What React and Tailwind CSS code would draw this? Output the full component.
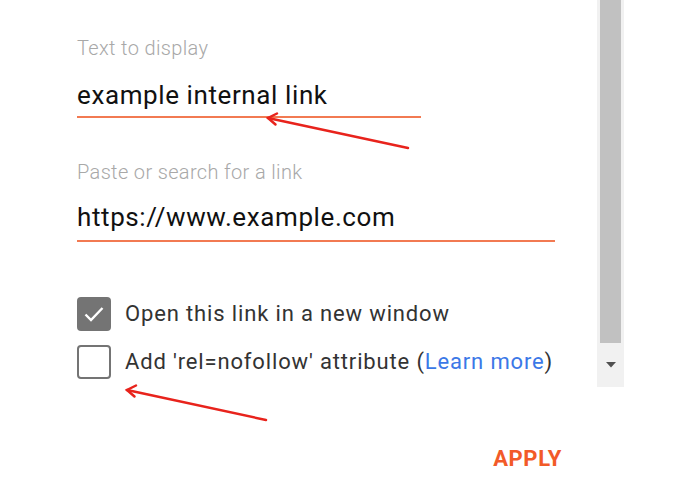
export default function App() {
  return (
    <div
      className="relative w-[697px] h-[495px] bg-white overflow-hidden"
      style={{ fontFamily: "Roboto, 'Noto Sans', sans-serif" }}
    >
      <div className="flex">
        <div className="w-[597px] pl-[77px]">
          <div className="pt-[36px] text-[20px] leading-[24px] tracking-[0.35px] text-[#a8a8a8] font-light">Text to display</div>
          <div className="mt-[20px] w-[344px] border-b-2 border-[#f27a52] pb-[6px] text-[26px] leading-[30px] tracking-[0.6px] text-[#111]">
            example internal link
          </div>
          <div className="mt-[42px] text-[20px] leading-[24px] tracking-[0.35px] text-[#a8a8a8] font-light">Paste or search for a link</div>
          <div className="mt-[18px] w-[478px] border-b-2 border-[#f27a52] pb-[8px] text-[26px] leading-[30px] tracking-[0.6px] text-[#111]">
            https://www.example.com
          </div>
          <div className="mt-[55px] flex flex-col gap-[14px]">
            <div className="flex items-center gap-[14px]">
              <div className="w-[34px] h-[34px] rounded-[4px] bg-[#747474] flex items-center justify-center">
                <svg width="26" height="26" viewBox="0 0 26 26">
                  <path d="M4.5 13.5l5.5 5.5L21.5 7" fill="none" stroke="white" strokeWidth="2.4" />
                </svg>
              </div>
              <span className="text-[22px] leading-[26px] tracking-[0.85px] text-[#333]">Open this link in a new window</span>
            </div>
            <div className="flex items-center gap-[14px]">
              <div className="w-[34px] h-[34px] rounded-[4px] border-2 border-[#747474]" />
              <span className="text-[22px] leading-[26px] tracking-[0.85px] text-[#333]">
                Add 'rel=nofollow' attribute (<span className="text-[#3b78e7]">Learn more</span>)
              </span>
            </div>
          </div>
          <div className="mt-[67px] flex justify-end pr-[35px]">
            <span className="text-[22px] leading-[26px] font-bold text-[#f25a28] tracking-[0.6px]">APPLY</span>
          </div>
        </div>
        <div className="w-[27px] h-[387px] bg-[#f1f1f1] flex flex-col items-center">
          <div className="w-[21px] h-[343px] bg-[#c1c1c1]" />
          <div className="flex-1 flex items-center justify-center">
            <svg width="12" height="8" viewBox="0 0 12 8">
              <path d="M1 1h10L6 6.5z" fill="#505050" />
            </svg>
          </div>
        </div>
      </div>
      <svg className="absolute inset-0 pointer-events-none" width="697" height="495">
        <g stroke="#e8231c" strokeWidth="2.5" fill="none" strokeLinecap="round">
          <line x1="408" y1="148" x2="268" y2="118" />
          <path d="M277 113.5L268 118L275.5 124.5" />
          <line x1="266" y1="420" x2="127" y2="390" />
          <path d="M136 385.5L127 390L134.5 396.5" />
        </g>
      </svg>
    </div>
  );
}
